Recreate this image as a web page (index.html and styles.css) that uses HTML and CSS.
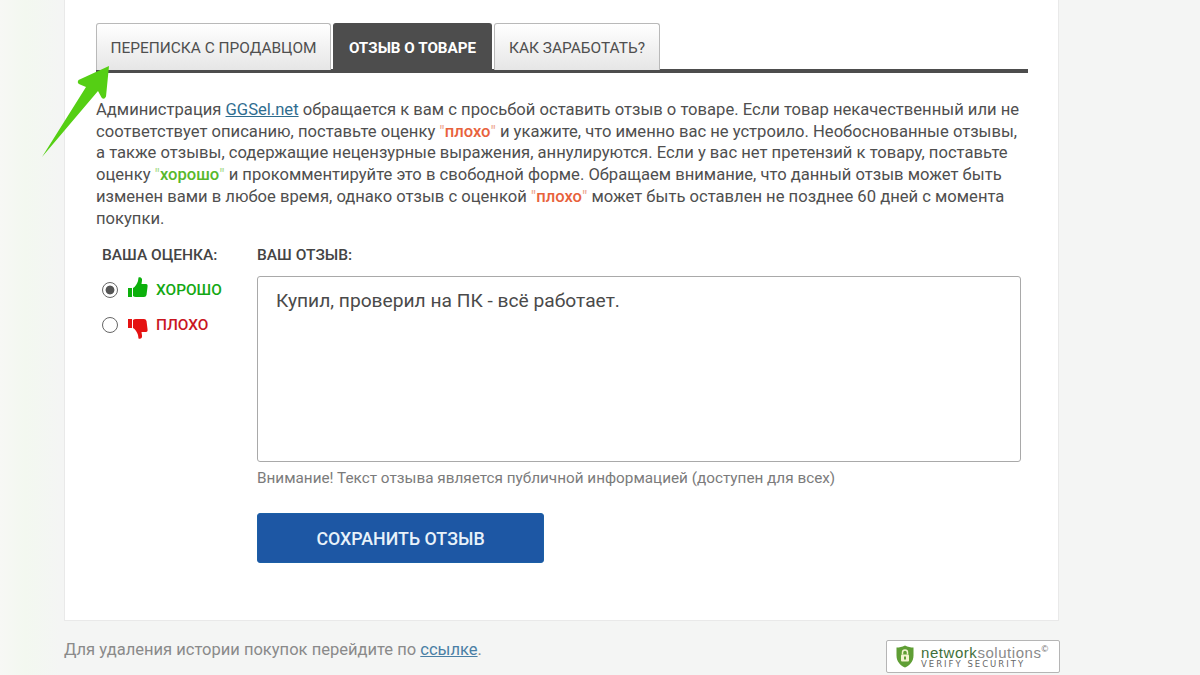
FILE: index.html
```html
<!DOCTYPE html>
<html lang="ru">
<head>
<meta charset="utf-8">
<title>Отзыв о товаре</title>
<link rel="stylesheet" href="styles.css">
</head>
<body>
<div class="page">
  <main class="panel">
    <nav class="tabs">
      <a class="tab tab-first">ПЕРЕПИСКА С ПРОДАВЦОМ</a>
      <a class="tab tab-active">ОТЗЫВ О ТОВАРЕ</a>
      <a class="tab tab-last">КАК ЗАРАБОТАТЬ?</a>
    </nav>
    <p class="notice">Администрация <a class="link">GGSel.net</a> обращается к вам с просьбой оставить отзыв о товаре. Если товар некачественный или не соответствует описанию, поставьте оценку <span class="bad-word">"<b>плохо</b>"</span> и укажите, что именно вас не устроило. Необоснованные отзывы, а также отзывы, содержащие нецензурные выражения, аннулируются. Если у вас нет претензий к товару, поставьте оценку <span class="good-word">"<b>хорошо</b>"</span> и прокомментируйте это в свободной форме. Обращаем внимание, что данный отзыв может быть изменен вами в любое время, однако отзыв с оценкой <span class="bad-word">"<b>плохо</b>"</span> может быть оставлен не позднее 60 дней с момента покупки.</p>
    <div class="review">
      <div class="rating">
        <div class="label">ВАША ОЦЕНКА:</div>
        <div class="option option-good">
          <span class="radio radio-on"></span>
          <svg class="thumb thumb-up" width="22" height="22" viewBox="0 0 22 22"><path fill="#0cb00c" d="M1 12h4v9H1zM6 12C8 11 10 8 11 5L11.500 1.500c2-1 4 .5 3.500 3L14.500 8H19Q21 8 20.500 11L19.500 19Q19 21 17 21H9Q7 21 6 20z"/></svg>
          <span class="option-text">ХОРОШО</span>
        </div>
        <div class="option option-bad">
          <span class="radio"></span>
          <svg class="thumb thumb-down" width="22" height="22" viewBox="0 0 22 22"><path fill="#e51212" d="M1 1h4v9H1zM6 2Q7 1 9 1H17Q19 1 19.500 3L20.500 11Q21 14 19 14H14.500L15 17.500c.5 2.500-1.500 4-3.500 3L11 17C10 14 8 11 6 10z"/></svg>
          <span class="option-text">ПЛОХО</span>
        </div>
      </div>
      <div class="comment">
        <div class="label">ВАШ ОТЗЫВ:</div>
        <div class="textbox">Купил, проверил на ПК - всё работает.</div>
        <div class="hint">Внимание! Текст отзыва является публичной информацией (доступен для всех)</div>
        <button class="save">СОХРАНИТЬ ОТЗЫВ</button>
      </div>
    </div>
  </main>
  <footer class="footer">
    <div class="footer-text">Для удаления истории покупок перейдите по <a class="link link-soft">ссылке</a>.</div>
    <div class="badge">
      <svg class="shield" width="18" height="23" viewBox="0 0 18 22"><path fill="#5f9e35" d="M9 0c3 1.500 5.500 2 8.500 2v8c0 6-4 10-8.500 12C4.500 20 .5 16 .5 10V2C3.500 2 6 1.500 9 0z"/><rect x="5" y="9" width="8" height="7" rx="1" fill="#f2f2d0"/><path d="M6.500 9V7a2.500 2.500 0 0 1 5 0v2" fill="none" stroke="#f2f2d0" stroke-width="1.500"/><rect x="8" y="11" width="2" height="3" fill="#5f9e35"/></svg>
      <div class="badge-text">
        <div class="badge-name"><b>network</b>solutions<sup>©</sup></div>
        <div class="badge-sub">VERIFY SECURITY</div>
      </div>
    </div>
  </footer>
</div>
<svg class="arrow" width="80" height="110" viewBox="0 0 80 110"><path fill="#55cf14" d="M69 6 38.500 20Q36.500 23 40 24.500L46 27 2 97 58 31 61.500 37.500Q64 40.500 66 36.500z"/></svg>
</body>
</html>
```
FILE: styles.css
```css
html, body {
  margin: 0;
  height: 675px;
  overflow: hidden;
}
body {
  background: linear-gradient(90deg, #f7f8f5 0, #f3f8f0 25px, #f4f5f4 60px);
  font-family: Roboto, "Liberation Sans", sans-serif;
  color: #4a4a4a;
  position: relative;
}
.page {
  width: 995px;
  margin-left: 64px;
}
.panel {
  box-sizing: border-box;
  height: 621px;
  background: #fff;
  border: 1px solid #e9e9e9;
  border-top: 0;
  padding: 23px 30px 0 31px;
}
.tabs {
  display: flex;
  gap: 2px;
  height: 46px;
  border-bottom: 4px solid #4d4d4d;
}
.tab {
  box-sizing: border-box;
  height: 47px;
  border: 1px solid #b9b9b9;
  border-bottom: 0;
  border-radius: 3px 3px 0 0;
  background: linear-gradient(#fff, #e6e6e6);
  color: #4f4f4f;
  font-size: 15.450px;
  line-height: 48px;
  text-align: center;
  white-space: nowrap;
}
.tab-first { width: 235px; }
.tab-last { width: 166px; }
.tab-active {
  width: 159px;
  background: #4d4d4d;
  border-color: #4d4d4d;
  color: #fff;
  font-weight: 700;
  font-size: 15.200px;
}
.notice {
  margin: 26px 0 0;
  font-size: 16.600px;
  line-height: 21.700px;
  color: #4f4f4f;
  width: 925px;
}
.link {
  color: #2f6d8f;
  text-decoration: underline;
}
.link-soft { color: #4a7fa5; }
.bad-word { color: #eea58f; }
.bad-word b { color: #e8623c; font-weight: 500; }
.good-word { color: #a6dc8c; }
.good-word b { color: #58b82c; font-weight: 500; }
.review {
  display: flex;
  margin-top: 16px;
}
.rating {
  width: 155px;
  padding-left: 6px;
  flex: none;
}
.label {
  font-size: 15.500px;
  font-weight: 500;
  line-height: 20px;
  color: #444;
}
.option {
  display: flex;
  align-items: center;
  height: 22px;
  margin-top: 13px;
  font-size: 15.400px;
  font-weight: 500;
}
.option-good { margin-top: 14px; color: #14a814; }
.option-bad { color: #c9161f; }
.radio {
  box-sizing: border-box;
  width: 16px;
  height: 16px;
  border: 1px solid #666;
  border-radius: 50%;
  background: #fff;
  margin-right: 9px;
  flex: none;
}
.radio-on {
  background: radial-gradient(circle, #555 0, #555 4px, #fff 4.800px);
}
.thumb {
  flex: none;
  margin-right: 7px;
  align-self: flex-start;
}
.thumb-up { margin-top: -3px; }
.thumb-down { margin-top: 4px; }
.comment {
  width: 764px;
  flex: none;
}
.textbox {
  box-sizing: border-box;
  height: 186px;
  margin-top: 11px;
  padding: 13px 18px;
  border: 1px solid #a9a9a9;
  border-radius: 3px;
  font-size: 19.200px;
  line-height: 22px;
  color: #4a4a4a;
  background: #fff;
}
.hint {
  margin-top: 6px;
  font-size: 15.300px;
  line-height: 20px;
  color: #7b7b7b;
}
.save {
  display: block;
  width: 287px;
  height: 50px;
  margin-top: 25px;
  padding: 0;
  border: 1px solid #1b5fa6;
  border-radius: 3px;
  background: #1d57a4;
  color: #e8f2fa;
  font-family: inherit;
  font-size: 17.800px;
  font-weight: 500;
}
.footer {
  display: flex;
  justify-content: space-between;
  align-items: flex-start;
  padding-top: 19px;
}
.footer-text {
  font-size: 16.550px;
  line-height: 20px;
  color: #8a8a8a;
}
.badge {
  box-sizing: border-box;
  display: flex;
  align-items: center;
  width: 174px;
  height: 33px;
  margin-right: -1px;
  padding-left: 9px;
  gap: 7px;
  background: #fff;
  border: 1px solid #b5b5b5;
  border-radius: 2px;
}
.badge-text { line-height: 1; }
.badge-name {
  font-family: "Liberation Sans", sans-serif;
  font-size: 15px;
  line-height: 15px;
  color: #8a8a8a;
  letter-spacing: .55px;
}
.badge-name b {
  color: #3f6f3a;
  font-weight: 400;
}
.badge-name sup {
  font-size: 9px;
  line-height: 0;
  color: #666;
}
.badge-sub {
  font-family: "DejaVu Sans", sans-serif;
  font-size: 8.500px;
  line-height: 9px;
  letter-spacing: 2px;
  color: #666;
}
.arrow {
  position: absolute;
  left: 40px;
  top: 60px;
}
```
